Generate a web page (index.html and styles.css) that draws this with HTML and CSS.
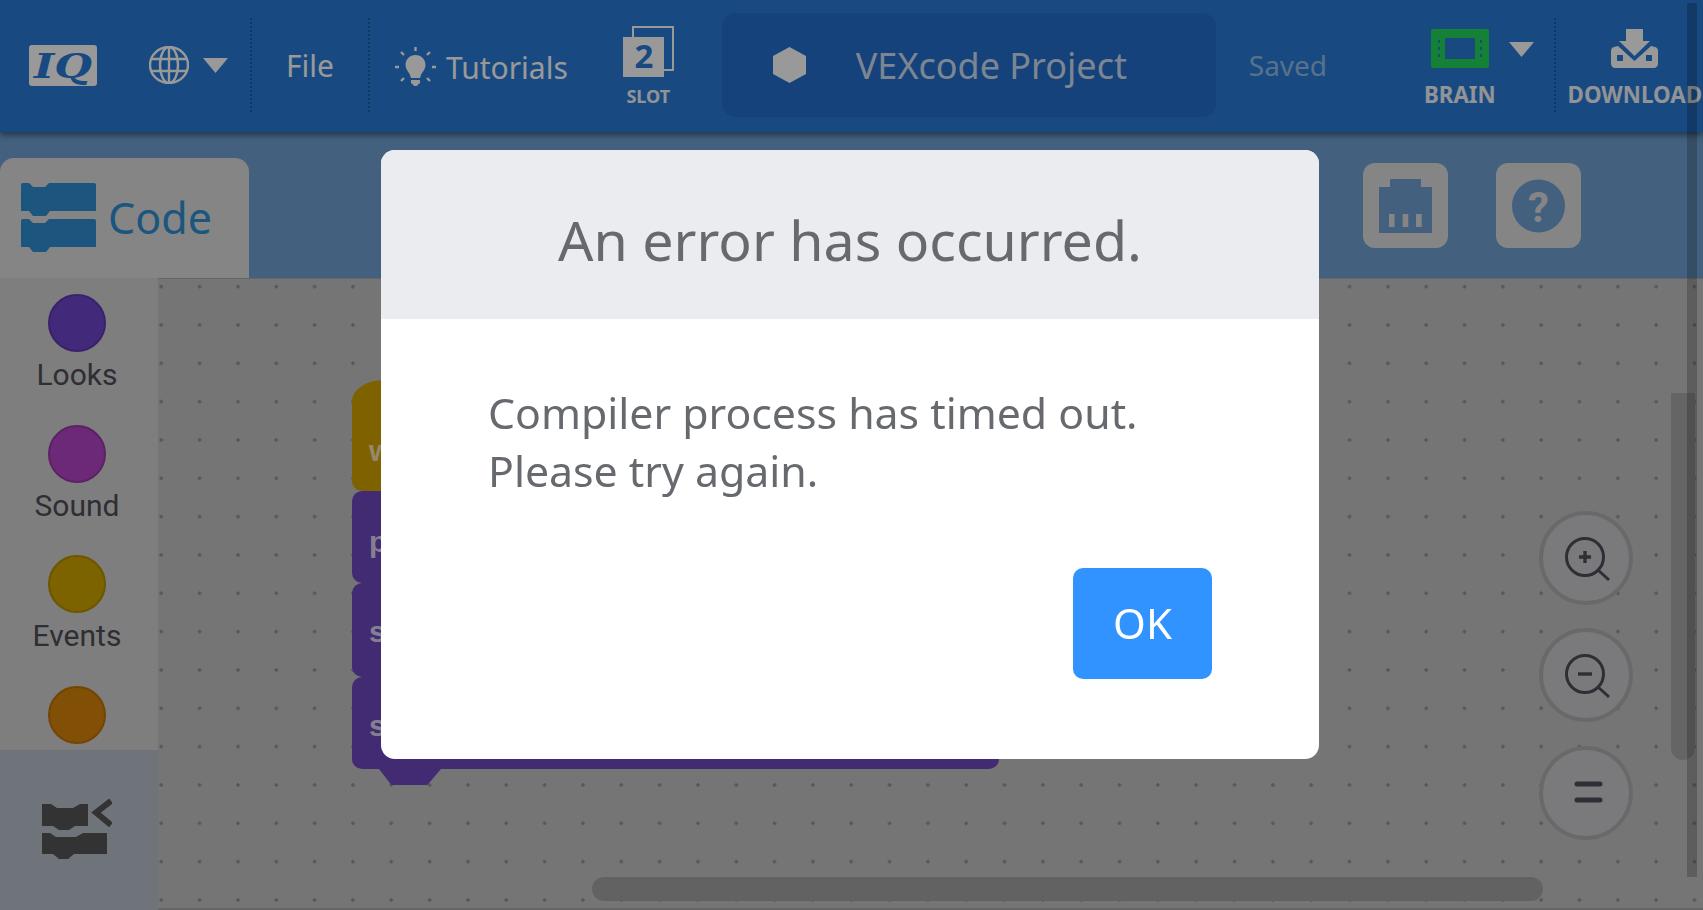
FILE: index.html
```html
<!DOCTYPE html>
<html lang="en">
<head>
<meta charset="utf-8">
<title>VEXcode IQ</title>
<link rel="stylesheet" href="styles.css">
</head>
<body>
<div class="app">
  <header class="header">
    <svg class="logo" viewBox="0 0 68 41"><rect width="68" height="41" rx="3" fill="#fff"/><text class="logo-text" x="34" y="33" text-anchor="middle" textLength="58" lengthAdjust="spacingAndGlyphs">IQ</text></svg>
    <svg class="globe" viewBox="0 0 40 38" fill="none" stroke="#fff" stroke-width="2.4"><ellipse cx="20" cy="19" rx="19" ry="18"/><ellipse cx="20" cy="19" rx="9" ry="18"/><path d="M20 1v36M2 13h36M2 25h36"/></svg>
    <svg class="caret" viewBox="0 0 25 15"><path d="M0 0h25L12.500 15z" fill="#fff"/></svg>
    <span class="divider div-a"></span>
    <span class="nav-text file">File</span>
    <span class="divider div-b"></span>
    <svg class="bulb" viewBox="0 0 41 41"><path d="M20.500 8c-6 0-10 4.500-10 10 0 4 2.500 6.500 4 9 1 1.500 1 3 1.500 4h9c.5-1 .5-2.500 1.500-4 1.500-2.500 4-5 4-9 0-5.500-4-10-10-10zM16 33h9v2.500c0 1-1 1.500-2 2-.5 2-4.500 2-5 0-1-.5-2-1-2-2z" fill="#fff"/><path d="M20.500 0v4M6 5l3 3M35 5l-3 3M0 20h4M37 20h4M6 34l3-3M35 34l-3-3" stroke="#fff" stroke-width="2.400" fill="none"/></svg>
    <span class="nav-text tutorials">Tutorials</span>
    <div class="stack slot">
      <svg class="slot-icon" viewBox="0 0 51 51"><path d="M10 11V1h40v43h-9" fill="none" stroke="#fff" stroke-width="2"/><rect y="11" width="41" height="40" fill="#fff"/><text class="slot-num" x="21" y="42" text-anchor="middle">2</text></svg>
      <span class="stack-label slot-label">SLOT</span>
    </div>
    <div class="project">
      <svg class="hex" viewBox="0 0 33 36"><path d="M16.500 0L33 9v18l-16.500 9L0 27V9z" fill="#fff"/></svg>
      <span class="project-name">VEXcode Project</span>
    </div>
    <span class="saved">Saved</span>
    <div class="stack brain">
      <svg class="brain-icon" viewBox="0 0 58 39"><rect width="58" height="39" rx="2" fill="#22d85a"/><rect x="14" y="9" width="30" height="21" fill="#287bd5"/><path d="M8 11v17M50 11v17" stroke="#287bd5" stroke-width="2" stroke-dasharray="3 4"/></svg>
      <span class="stack-label">BRAIN</span>
    </div>
    <svg class="caret caret-brain" viewBox="0 0 25 15"><path d="M0 0h25L12.500 15z" fill="#fff"/></svg>
    <span class="divider div-c"></span>
    <div class="stack download">
      <svg class="dl-icon" viewBox="0 0 47 39"><path d="M15 0h17v12h7L23.500 27 8 12h7z" fill="#fff"/><path d="M7 17l-4 1c-2 .5-3 2-3 4v13c0 2 2 4 4 4h39c2 0 4-2 4-4V22c0-2-1-3.500-3-4l-4-1-16.500 15z" fill="#fff"/><rect x="6" y="26" width="6" height="6" fill="#287bd5"/><rect x="35" y="26" width="6" height="6" fill="#287bd5"/></svg>
      <span class="stack-label">DOWNLOAD</span>
    </div>
  </header>

  <div class="topbar">
    <div class="tab">
      <svg class="code-icon" viewBox="0 0 75 69"><path d="M0 2Q0 0 2 0H8L12 4H24L28 0H73Q75 0 75 2V28H29L25 33H12L8 28H0Z"/><path d="M0 38Q0 36 2 36H8L12 40H24L28 36H73Q75 36 75 38V64H29L25 69H12L8 64H0Z"/></svg>
      <span class="tab-label">Code</span>
    </div>
    <div class="tools">
      <div class="tool">
        <svg class="tool-icon" viewBox="0 0 53 54"><path d="M0 8h11V1q0-1 1-1h29q1 0 1 1v7h11v46H0z" fill="#70a0d4"/><path d="M10 35h5.500v13H10zM23.700 35h5.600v13h-5.600zM37 35h5.700v13H37z" fill="#dedede"/></svg>
      </div>
      <div class="tool">
        <svg class="tool-icon" viewBox="0 0 53 54"><circle cx="26.500" cy="27" r="26.500" fill="#70a0d4"/><text class="help-mark" x="26.500" y="43" text-anchor="middle">?</text></svg>
      </div>
    </div>
  </div>

  <main class="main">
    <aside class="sidebar">
      <div class="cats">
        <div class="cat"><span class="dot dot-looks"></span><span class="cat-label">Looks</span></div>
        <div class="cat"><span class="dot dot-sound"></span><span class="cat-label">Sound</span></div>
        <div class="cat"><span class="dot dot-events"></span><span class="cat-label">Events</span></div>
        <div class="cat"><span class="dot dot-control"></span></div>
      </div>
      <div class="toggle">
        <svg class="toggle-icon" viewBox="0 0 70 62"><path d="M0 6H9L15 10H31L38 6H46V28H33L27 32H17L11 28H0Z"/><path d="M0 35H8L14 39H34L41 35H65V56H32L26 61H17L11 56H0Z"/><path class="chev" d="M69 3L54 14.500L69 27"/></svg>
      </div>
    </aside>
    <section class="canvas">
      <svg class="grid" width="100%" height="100%"><defs><pattern id="dots" x="0.300" y="4.700" width="38.330" height="38.330" patternUnits="userSpaceOnUse"><path d="M1 3H5M3 1V5" stroke="#8f8f8f" stroke-width="1.500"/></pattern></defs><rect width="100%" height="100%" fill="url(#dots)"/></svg>
      <div class="blocks">
        <div class="block block-hat">w</div>
        <div class="block block-play">p</div>
        <div class="block block-mid">s</div>
        <div class="block block-last">s</div>
      </div>
      <div class="zooms">
        <div class="zoom-btn"><svg class="zoom-icon" viewBox="0 0 46 46" fill="none" stroke="#4d4d5a" stroke-width="3"><circle cx="20" cy="20" r="18.500"/><path d="M33 33l11 10"/><path d="M14 20h12M20 14v12" stroke-width="3.400"/></svg></div>
        <div class="zoom-btn"><svg class="zoom-icon" viewBox="0 0 46 46" fill="none" stroke="#4d4d5a" stroke-width="3"><circle cx="20" cy="20" r="18.500"/><path d="M33 33l11 10"/><path d="M13 20h14" stroke-width="3.400"/></svg></div>
        <div class="zoom-btn"><svg class="zoom-icon" viewBox="0 0 46 46" fill="none" stroke="#4d4d5a" stroke-width="5" stroke-linecap="round"><path d="M12 13h23M12 29h23"/></svg></div>
      </div>
      <div class="thumb-v"></div>
      <div class="thumb-h"></div>
    </section>
  </main>
  <div class="page-scroll"></div>
</div>

<div class="backdrop"></div>
<div class="modal">
  <div class="modal-head">An error has occurred.</div>
  <div class="modal-body">Compiler process has timed out.<br>Please try again.</div>
  <div class="modal-foot"><button class="ok">OK</button></div>
</div>
</body>
</html>
```
FILE: styles.css
```css
* { box-sizing: border-box; }
html, body { margin: 0; height: 100%; overflow: hidden; }
body { font-family: "Noto Sans", sans-serif; background: #dedede; }

.app { position: relative; width: 1703px; height: 910px; display: flex; flex-direction: column; overflow: hidden; }

/* Header */
.header { position: relative; z-index: 2; flex: 0 0 132px; display: flex; align-items: center; background: #287bd5; box-shadow: 0 3px 6px rgba(0,0,0,.45); color: #fff; overflow: hidden; }
.header > * { flex-shrink: 0; }
.logo { width: 68px; height: 41px; margin-left: 29px; margin-top: -1px; }
.logo-text { font: italic 700 33px "DejaVu Serif", serif; fill: #287bd5; }
.globe { width: 40px; height: 38px; margin-left: 52px; margin-top: -2px; }
.caret { width: 25px; height: 15px; margin-left: 14px; margin-top: -2px; }
.divider { width: 0; height: 94px; border-left: 2px dotted #1d5fa8; margin-top: -2px; }
.div-a { margin-left: 22px; }
.div-b { margin-left: 34px; }
.div-c { margin-left: 20px; }
.nav-text { font-size: 30px; line-height: 40px; color: #fff; }
.file { margin-left: 34px; margin-top: -1px; }
.bulb { width: 41px; height: 41px; margin-left: 25px; margin-top: 3px; }
.tutorials { margin-left: 10px; margin-top: 4px; }
.stack { display: flex; flex-direction: column; align-items: center; }
.stack-label { font-size: 22.300px; font-weight: 700; line-height: 30px; white-space: nowrap; color: #f2f6fa; }
.slot { width: 51px; margin-left: 55px; margin-top: 1px; }
.slot-icon { width: 51px; height: 51px; }
.slot-label { font-size: 18px; line-height: 24px; margin-top: 7px; }
.slot-num { font: 700 33px "Noto Sans", sans-serif; fill: #287bd5; }
.project { width: 494px; height: 104px; margin-left: 48px; margin-top: -2px; display: flex; align-items: center; padding-left: 51px; border-radius: 14px; background: #236ecb; }
.hex { width: 33px; height: 36px; }
.project-name { margin-left: 50px; font-size: 36px; color: rgba(255,255,255,.8); white-space: nowrap; }
.saved { width: 78px; margin-left: 33px; font-size: 28px; margin-top: -3px; color: rgba(255,255,255,.5); }
.brain { width: 70px; margin-left: 98px; margin-top: 6px; }
.brain-icon { width: 58px; height: 39px; margin-bottom: 12px; }
.caret-brain { margin-left: 14px; margin-top: -34px; }
.download { width: 134px; margin-left: 12px; margin-top: 6px; }
.dl-icon { width: 47px; height: 39px; margin-bottom: 12px; }

/* Band under the header */
.topbar { flex: 0 0 146px; display: flex; align-items: flex-end; background: #70a0d4; }
.tab { width: 249px; height: 120px; display: flex; align-items: center; padding: 0 0 0 21px; border-radius: 14px 14px 0 0; background: #dedede; }
.code-icon { width: 75px; height: 69px; fill: #2f8fd4; margin-top: -2px; }
.tab-label { margin-left: 12px; font-size: 43px; line-height: 50px; color: #2f8fd4; }
.tools { display: flex; gap: 48px; margin-left: auto; margin-right: 122px; margin-bottom: 30px; }
.tool { width: 85px; height: 85px; display: flex; align-items: center; justify-content: center; border-radius: 12px; background: #dedede; }
.tool-icon { width: 53px; height: 54px; }
.help-mark { font: 700 42px "Roboto", sans-serif; fill: #dedede; }

/* Main area */
.main { flex: 1; display: flex; min-height: 0; }
.sidebar { flex: 0 0 158px; display: flex; flex-direction: column; background: #d2d2d2; }
.cats { flex: 1; min-height: 0; display: flex; flex-direction: column; align-items: center; gap: 29.670px; padding: 16px 4px 0 0; overflow: hidden; }
.cat { flex-shrink: 0; display: flex; flex-direction: column; align-items: center; }
.dot { width: 58px; height: 58px; border-radius: 50%; border: 2px solid; }
.dot-looks { background: #7045cc; border-color: #5f38b8; }
.dot-sound { background: #b445c6; border-color: #9a38aa; }
.dot-events { background: #d0a500; border-color: #b58f00; }
.dot-control { background: #d88409; border-color: #c07406; }
.cat-label { margin-top: 3px; font: 400 30px/40px "Roboto", sans-serif; color: #4d4d55; }
.toggle { flex: 0 0 160px; padding: 48px 0 0 42px; background: #b9c1cb; }
.toggle-icon { display: block; width: 70px; height: 62px; fill: #555; }
.chev { fill: none; stroke: #555; stroke-width: 6; }

.canvas { position: relative; flex: 1; overflow: hidden; background: #c4c4c4; border-top: 1px solid #aaa; border-bottom: 2px solid #aaa; }
.grid { position: absolute; inset: 0; }
.blocks { position: absolute; left: 194px; top: 101px; display: flex; flex-direction: column; }
.block { width: 647px; height: 92px; padding: 35px 0 0 17px; border-radius: 10px; background: #7048c0; color: #ddd5f0; font: 700 30px/28px "Liberation Sans", sans-serif; }
.block-hat { height: 111px; padding-top: 57px; background: #d4a300; border-radius: 32px 10px 10px 10px / 21px 10px 10px 10px; color: #f5e5b0; }
.block-play { padding-top: 37px; }
.block-mid { height: 94px; }
.block-last { position: relative; }
.block-last::after { content: ""; position: absolute; left: 27px; bottom: -16px; width: 62px; height: 16px; background: #7048c0; clip-path: polygon(0 0, 100% 0, 78% 100%, 20% 100%); }

.zooms { position: absolute; left: 1381px; top: 232px; display: flex; flex-direction: column; gap: 23.300px; }
.zoom-btn { width: 94px; height: 94px; display: flex; align-items: center; justify-content: center; border-radius: 50%; border: 4px solid #b0b0b0; background: #cccccf; }
.zoom-icon { width: 46px; height: 46px; margin: 3px 0 0 3px; }

.thumb-v { position: absolute; left: 1513px; top: 114px; width: 24px; height: 367px; border-radius: 0 0 12px 12px; background: #a8a8a8; }
.thumb-h { position: absolute; left: 434px; top: 598px; width: 951px; height: 24px; border-radius: 12px; background: #a4a4a4; }
.page-scroll { position: absolute; left: 1687px; top: 3px; width: 10px; height: 874px; background: rgba(0,0,0,.2); z-index: 3; }

/* Dialog */
.backdrop { position: fixed; inset: 0; z-index: 10; background: rgba(0,0,0,.4); }
.modal { position: fixed; z-index: 11; left: 381px; top: 150px; width: 938px; height: 609px; display: flex; flex-direction: column; border-radius: 14px; overflow: hidden; background: #fff; color: #66696e; }
.modal-head { flex: 0 0 169px; display: flex; align-items: center; justify-content: center; padding-top: 10px; background: #ebecf0; font-size: 55.500px; }
.modal-body { padding: 65px 107px 0; font-size: 42.800px; line-height: 58px; }
.modal-foot { display: flex; justify-content: flex-end; padding: 68px 107px 0; }
.ok { width: 139px; height: 111px; padding-bottom: 4px; border: 0; border-radius: 10px; background: #3093ff; color: #fff; font: 400 42px "Noto Sans", sans-serif; }
```
